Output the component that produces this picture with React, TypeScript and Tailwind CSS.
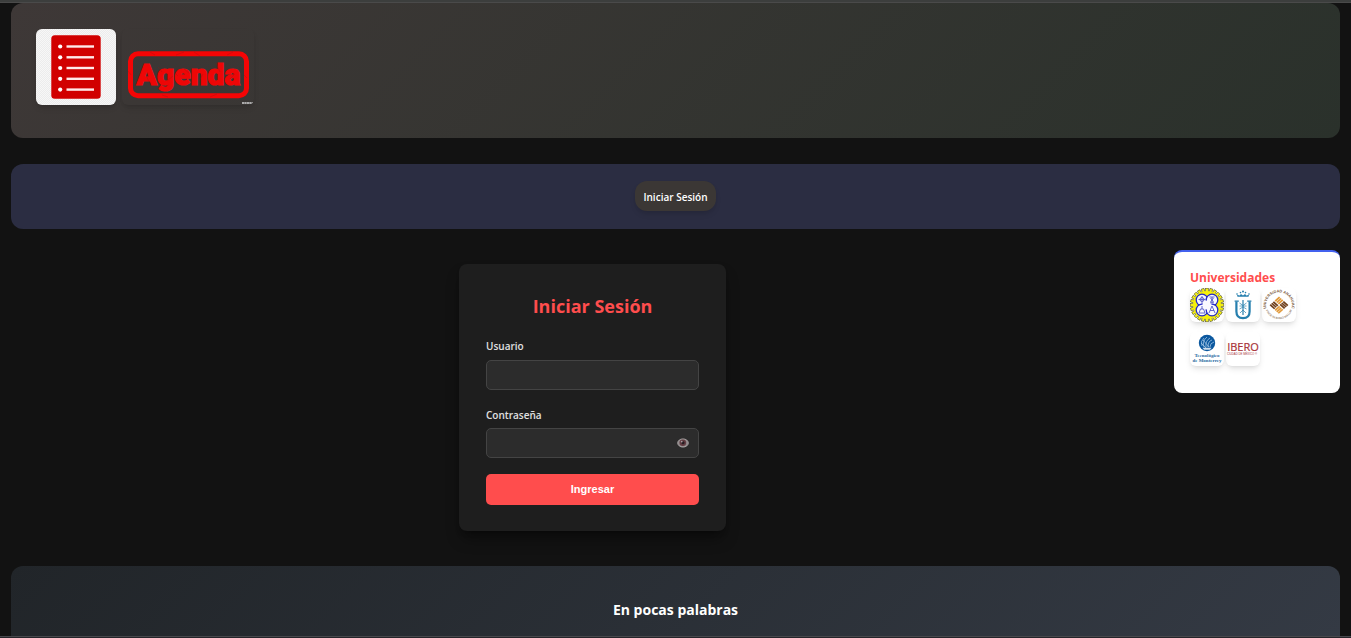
import React from "react";

const TEETH = Array.from({ length: 24 }, (_, i) => i * 15);

function NotebookLogo() {
  return (
    <svg viewBox="0 0 80 76" className="h-[76px] w-20 rounded-md shadow-md" role="img" aria-label="Libreta">
      <defs>
        <pattern id="checks" width="2" height="2" patternUnits="userSpaceOnUse">
          <rect width="2" height="2" fill="#f7f7f7" />
          <rect width="1" height="1" fill="#ececec" />
          <rect x="1" y="1" width="1" height="1" fill="#ececec" />
        </pattern>
      </defs>
      <rect width="80" height="76" fill="url(#checks)" />
      <rect x="15.3" y="6.3" width="49.4" height="63.4" rx="3.5" fill="#d10000" />
      {[17.5, 28.3, 39, 49.8, 60.6].map((y) => (
        <g key={y} fill="#fff">
          <circle cx="24.2" cy={y} r="2.1" />
          <rect x="30.5" y={y - 1.2} width="27.5" height="2.4" fill="#ffe9e9" />
        </g>
      ))}
    </svg>
  );
}

function AgendaStamp() {
  return (
    <svg viewBox="0 0 132 76" className="h-[76px] w-[132px] rounded-md shadow-md" role="img" aria-label="Agenda">
      <rect x="8.5" y="24.7" width="116" height="42" rx="7.5" fill="none" stroke="#f50505" strokeWidth="5" />
      <text
        x="66.5"
        y="55.5"
        textAnchor="middle"
        fontSize="30"
        fontWeight="900"
        fill="#ee0606"
        stroke="#ee0606"
        strokeWidth="1.2"
        fontFamily="Roboto, sans-serif"
      >
        Agenda
      </text>
      <g stroke="#8d1d1b" strokeWidth="0.5" opacity="0.6" fill="none">
        <path d="M24 46l3 7M36 38l4 5M45 52l6-5M62 40l5 4M77 52l4-7M94 34l4 9M108 50l5-5M53 44l3 3" />
        <path d="M28 23l5 3M54 26l8-3M72 23l6 4M105 26l6-3M40 66l6 2M88 68l7-3M6 42l3 4M122 46l3 3" />
      </g>
      <path d="M120 74h12" stroke="#aaa" strokeWidth="2" strokeDasharray="2.2 .3" />
    </svg>
  );
}

function GearSeal() {
  return (
    <svg viewBox="0 0 34 34" className="size-[34px]" role="img" aria-label="Universidad Autónoma">
      {TEETH.map((a) => (
        <rect key={a} x="15.6" y="0.2" width="2.8" height="4.8" fill="#f3ee16" stroke="#55552c" strokeWidth=".6" transform={`rotate(${a} 17 17)`} />
      ))}
      <circle cx="17" cy="17" r="14" fill="#f6f10a" />
      <g fill="#f8f9ff" stroke="#2327c9" strokeWidth="1.3">
        <circle cx="12" cy="12" r="5.8" />
        <circle cx="22" cy="12" r="5.8" />
        <circle cx="12" cy="22" r="5.8" />
        <circle cx="22" cy="22" r="5.8" />
      </g>
      <circle cx="17" cy="17" r="4.6" fill="#f8f9ff" />
      <g fill="none" stroke="#5559c6" strokeWidth=".9">
        <circle cx="12" cy="11.5" r="2" />
        <path d="M12 8v8M8.5 11.5h7M19.5 9h5M20 14.8h4M22 9v6M20.5 10l3 4M23.5 10l-3 4M12 18v3M9 25l1.5-4h3l1.5 4zM22 18l-3 7M22 18l3 7M20 22.5h4" />
      </g>
    </svg>
  );
}

function CrownShield() {
  return (
    <svg viewBox="0 0 34 34" className="size-[34px]" role="img" aria-label="Universidad del Valle">
      <g fill="none" stroke="#267fae">
        <path d="M8.6 13.2h4.2M21.2 13.2h4.2" strokeWidth="1.2" />
        <path d="M10.4 13.5v10q0 6.6 6.6 6.6t6.6-6.6v-10" strokeWidth="2.2" />
        <path d="M17 12v15" strokeWidth="1.2" />
        <path d="M13.5 15l3.5 2.5 3.5-2.5M13.5 18h7M13.5 21l3.5-2 3.5 2M14 25l3-3 3 3" strokeWidth=".7" />
      </g>
      <path d="M11.5 8.8l-.5-2 2.6.8L15 6l2 1.4L19 6l1.4 1.6 2.6-.8-.5 2z" fill="#267fae" />
      <g fill="#267fae">
        <circle cx="11" cy="6" r=".8" />
        <circle cx="14.5" cy="4.6" r=".8" />
        <circle cx="17" cy="3.6" r="1" />
        <circle cx="19.5" cy="4.6" r=".8" />
        <circle cx="23" cy="6" r=".8" />
      </g>
    </svg>
  );
}

function WovenSeal() {
  return (
    <svg viewBox="0 0 34 34" className="size-[34px]" role="img" aria-label="Universidad Anáhuac">
      <defs>
        <path id="ringTop" d="M5.5 23.5A13 13 0 1 1 28.5 23.5" />
        <path id="ringBottom" d="M3.2 19.5A14 14 0 0 0 30.8 19.5" />
      </defs>
      <g fontFamily="'Liberation Sans', sans-serif" fontWeight="700">
        <text fontSize="3.8" fill="#806043">
          <textPath href="#ringTop" startOffset="50%" textAnchor="middle">UNIVERSIDAD ANÁHUAC</textPath>
        </text>
        <text fontSize="2.9" fill="#a08a75">
          <textPath href="#ringBottom" startOffset="50%" textAnchor="middle">VINCE IN BONO MALUM</textPath>
        </text>
      </g>
      <g transform="translate(17 17.2) scale(1 .9) rotate(45)">
        <g fill="#e29a3a">
          <rect x="-6.8" y="-6.8" width="1.8" height="6.3" />
          <rect x="-4.6" y="-6.8" width="1.8" height="6.3" />
          <rect x="-2.4" y="-6.8" width="1.8" height="6.3" />
          <rect x=".5" y=".5" width="1.8" height="6.3" />
          <rect x="2.7" y=".5" width="1.8" height="6.3" />
          <rect x="4.9" y=".5" width="1.8" height="6.3" />
        </g>
        <g fill="#70401c">
          <rect x=".2" y="-6.8" width="6.3" height="1.8" />
          <rect x=".2" y="-4.6" width="6.3" height="1.8" />
          <rect x=".2" y="-2.4" width="6.3" height="1.8" />
          <rect x="-6.6" y=".5" width="6.3" height="1.8" />
          <rect x="-6.6" y="2.7" width="6.3" height="1.8" />
          <rect x="-6.6" y="4.9" width="6.3" height="1.8" />
        </g>
      </g>
    </svg>
  );
}

function TecSeal() {
  return (
    <svg viewBox="0 0 34 34" className="size-[34px]" role="img" aria-label="Tecnológico de Monterrey">
      <circle cx="17" cy="11" r="8.2" fill="#0b589f" />
      <g fill="none" stroke="#b4d3ed" strokeWidth=".7">
        <path d="M12 14q-2-5 2-8M14 15q-2-6 3-10M16 15q-1-6 4-9M18 15q0-6 4-7M20 15q0-4 4-5M11 11l5 5M13 8l6 7" />
      </g>
      <path d="M12.5 15.8h9l-1.5 2h-6z" fill="#fff" opacity=".8" />
      <g fill="#286a9f" fontFamily="'Liberation Serif', serif" fontWeight="700" textAnchor="middle">
        <text x="17" y="25" fontSize="5">Tecnológico</text>
        <text x="17" y="30" fontSize="5">de Monterrey</text>
      </g>
    </svg>
  );
}

function IberoLogo() {
  return (
    <svg viewBox="0 0 34 34" className="size-[34px]" role="img" aria-label="Ibero">
      <g fill="#a83239" textAnchor="middle">
        <text x="17" y="19" fontSize="11" stroke="#a83239" strokeWidth=".2" fontFamily="'Open Sans', sans-serif">IBERO</text>
        <text x="16" y="23" fontSize="2.8" fontFamily="'Liberation Sans', sans-serif">CIUDAD DE MÉXICO ®</text>
      </g>
    </svg>
  );
}

function EyeIcon() {
  return (
    <svg viewBox="0 0 12 10" className="h-[10px] w-3" aria-hidden="true">
      <ellipse cx="6" cy="5" rx="5.3" ry="4.1" fill="#8e8789" stroke="#aaa5a5" strokeWidth=".9" />
      <circle cx="5.8" cy="4.8" r="3.3" fill="#633c42" />
      <circle cx="6" cy="4.8" r="1.5" fill="#251d22" />
      <circle cx="4.7" cy="3.6" r=".9" fill="#aaa0a6" />
    </svg>
  );
}

const UNIVERSITIES = [GearSeal, CrownShield, WovenSeal, TecSeal, IberoLogo];

export default function App() {
  return (
    <div className="flex min-h-screen flex-col bg-[#121212] font-['Open_Sans','Noto_Sans',sans-serif] text-white">
      <div className="h-[3px] border-b border-[#4a4a4a] bg-[#3c3e3d]" />

      <header className="mx-[11px] flex rounded-xl bg-linear-135 from-[#3e3837] to-[#2a312b] px-[25px] pt-[26px] pb-[33px]">
        <a href="#inicio" className="flex gap-[6px]">
          <NotebookLogo />
          <AgendaStamp />
        </a>
      </header>

      <nav className="mx-[11px] mt-[26px] flex justify-center rounded-xl bg-[#2b2d42] pt-[17px] pb-[18px]">
        <a href="#login" className="rounded-xl bg-[#3b3735] px-2 pt-2 pb-[6px] text-[10px] leading-4 font-semibold shadow-md">
          Iniciar Sesión
        </a>
      </nav>

      <div className="mx-[11px] mt-[21px] flex items-start">
        <main className="flex flex-1 justify-center pt-[14px]">
          <form id="login" className="w-[267px] rounded-lg bg-[#1e1e1e] px-[27px] pt-[29px] pb-[26px] shadow-lg shadow-black/40" onSubmit={(e) => e.preventDefault()}>
            <h1 className="text-center text-[18px] leading-[26px] font-bold text-[#ff4d4d]">Iniciar Sesión</h1>
            <label htmlFor="user" className="mt-[18px] block text-[10px] leading-[18px] font-semibold text-[#e0e0e0]">Usuario</label>
            <input id="user" type="text" className="mt-[5px] block h-[30px] w-full rounded-[5px] border border-[#444] bg-[#2c2c2c] px-2 text-xs" />
            <label htmlFor="password" className="mt-4 block text-[10px] leading-[18px] font-semibold text-[#e0e0e0]">Contraseña</label>
            <div className="mt-1 flex h-[30px] items-center rounded-[5px] border border-[#444] bg-[#2c2c2c] pr-[9px]">
              <input id="password" type="password" className="min-w-0 flex-1 bg-transparent px-2 text-xs outline-none" />
              <button type="button" aria-label="Mostrar contraseña"><EyeIcon /></button>
            </div>
            <button type="submit" className="mt-4 h-[31px] w-full rounded-[5px] bg-[#ff4d4d] font-['Liberation_Sans',sans-serif] text-[11px] font-bold">
              Ingresar
            </button>
          </form>
        </main>

        <aside className="w-[166px] rounded-lg border-t-2 border-[#4361ee] bg-white px-4 pt-[17px] pb-[27px]">
          <h2 className="text-xs leading-[18px] font-bold text-[#ff4d4d]">Universidades</h2>
          <div className="flex flex-wrap gap-x-[2px] gap-y-[10px] pt-px">
            {UNIVERSITIES.map((Logo, i) => (
              <a key={i} href="#universidades" className="rounded-md shadow-md">
                <Logo />
              </a>
            ))}
          </div>
        </aside>
      </div>

      <section className="mx-[11px] mt-[35px] flex-1 rounded-t-xl bg-linear-135 from-[#212529] to-[#343a44] pt-[33px] pb-[15px]">
        <h2 className="text-center text-[14px] leading-[22px] font-bold">En pocas palabras</h2>
      </section>
      <div className="h-[2px] border-t border-[#48484c] bg-[#25252a]" />
    </div>
  );
}
